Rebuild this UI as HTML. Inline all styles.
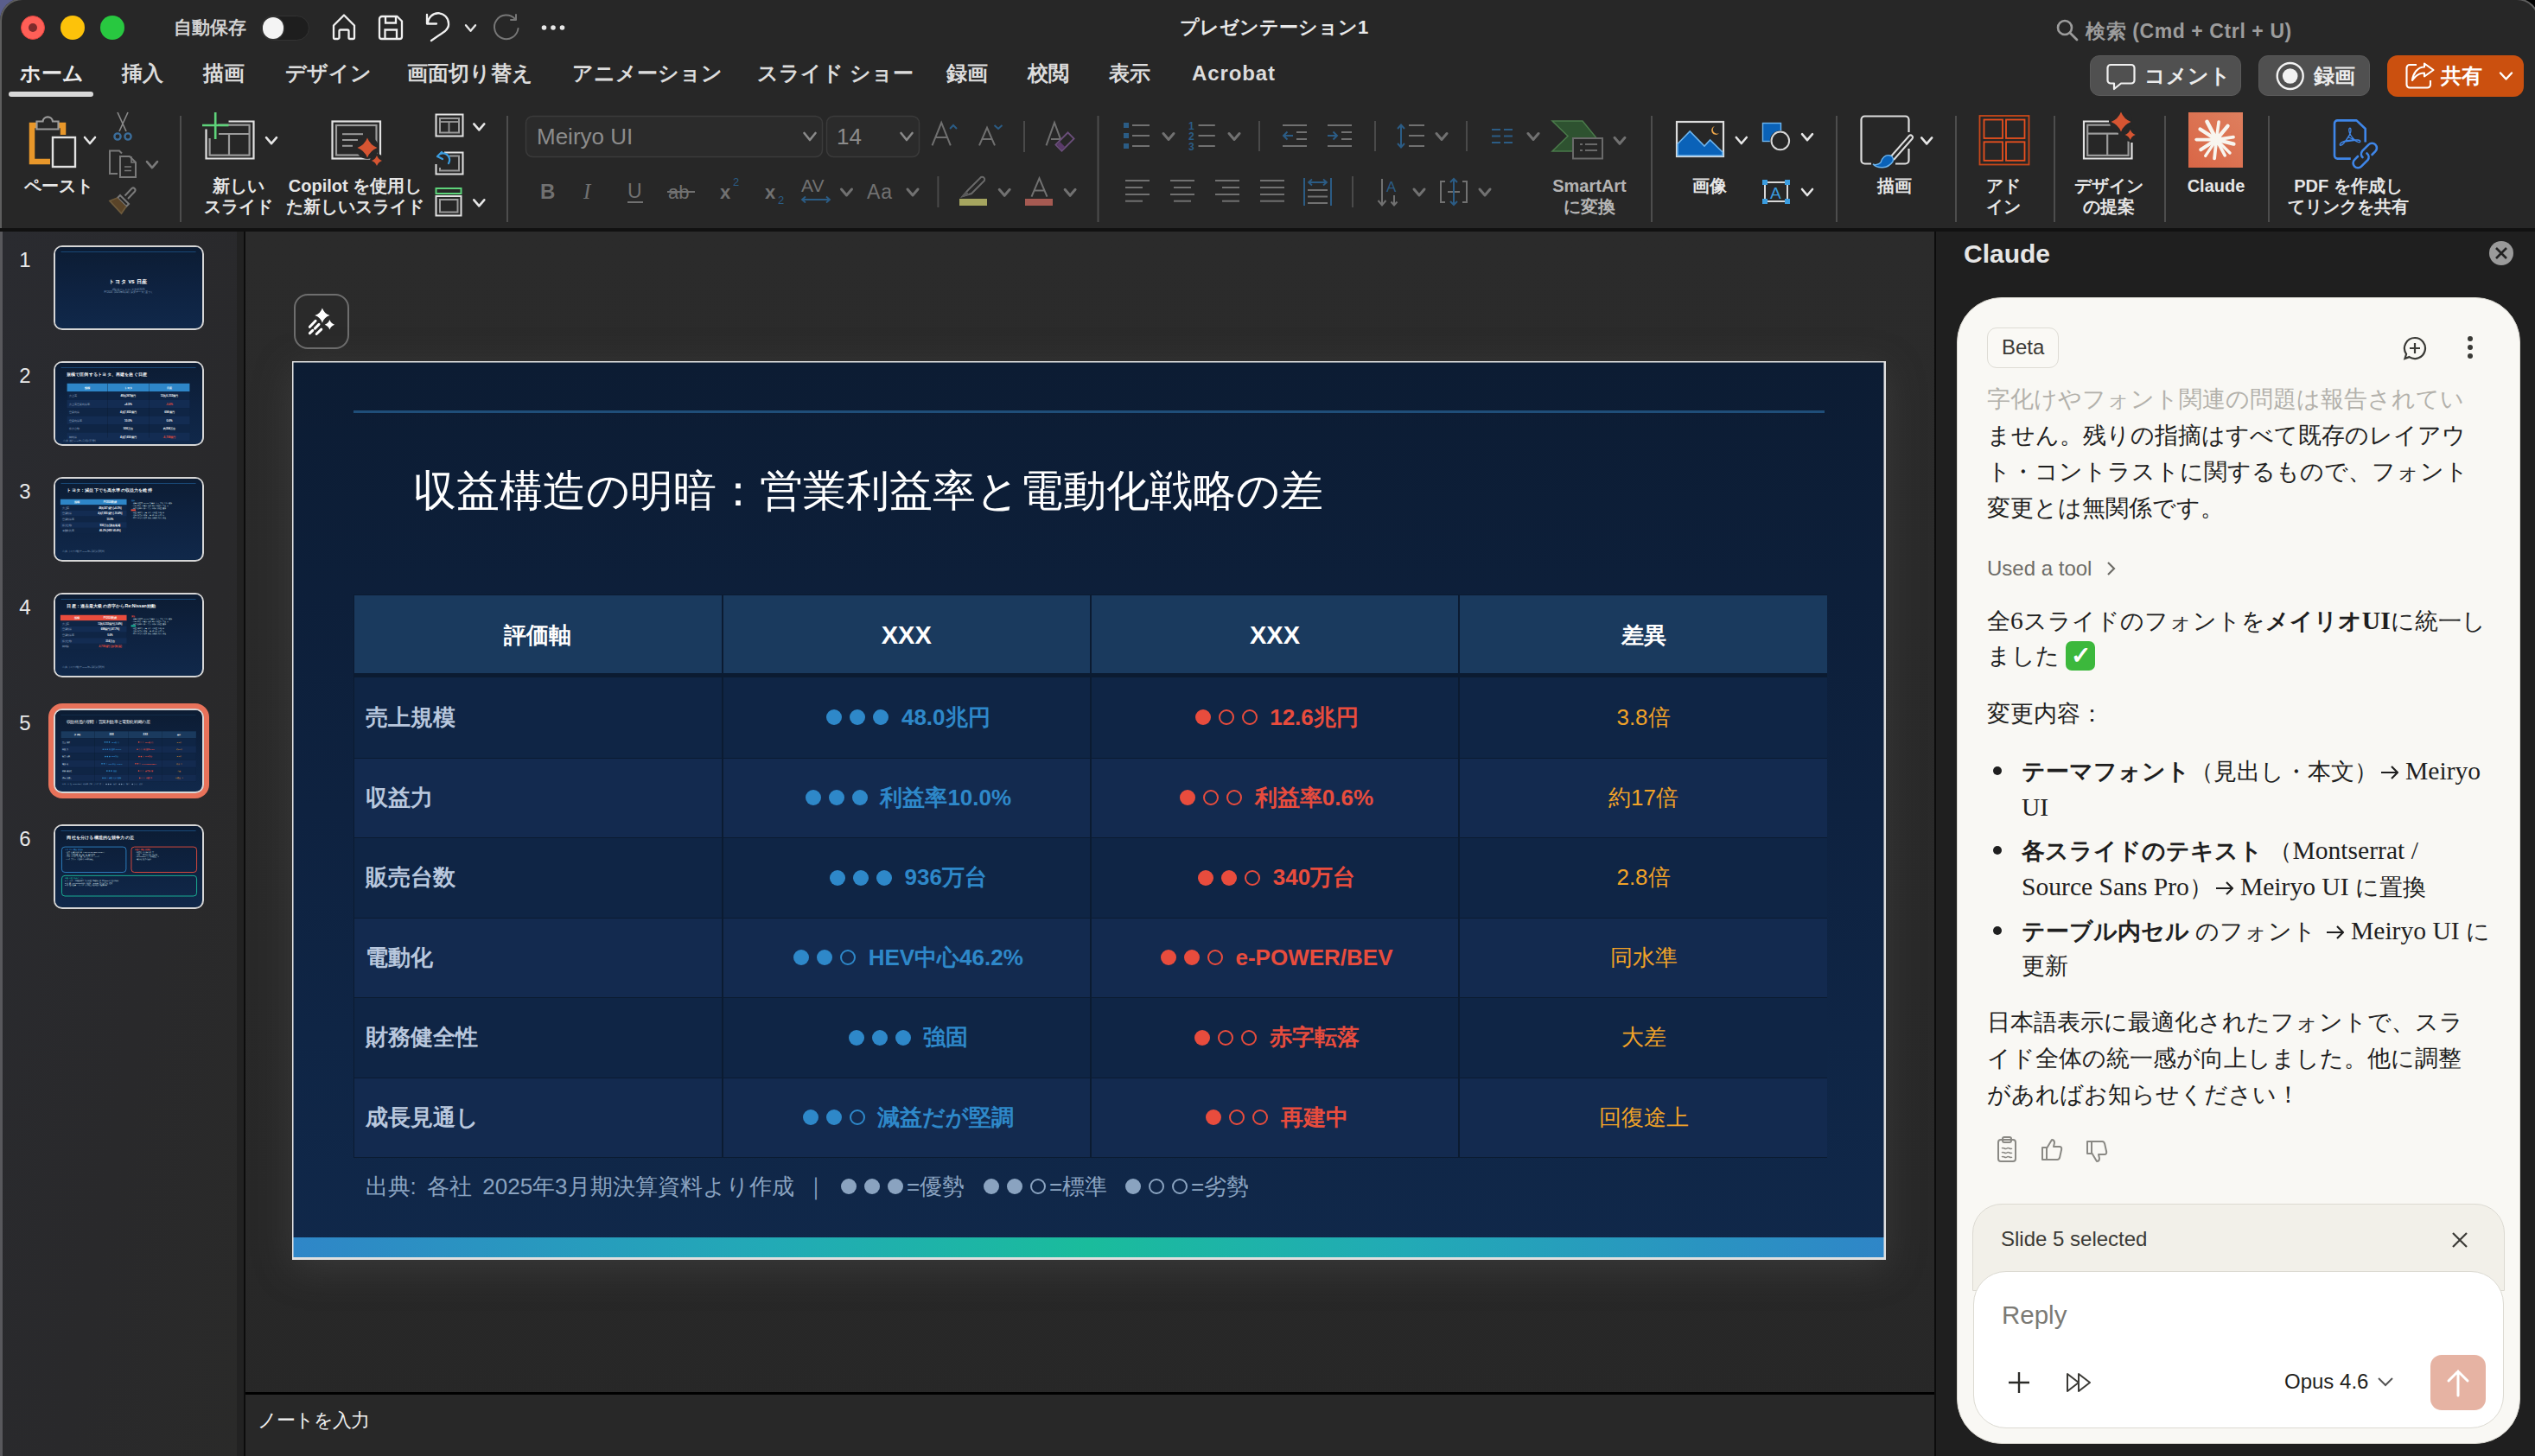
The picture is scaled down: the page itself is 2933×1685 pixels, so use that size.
<!DOCTYPE html>
<html><head><meta charset="utf-8">
<style>
*{margin:0;padding:0;box-sizing:border-box}
html,body{width:2933px;height:1685px;overflow:hidden;background:linear-gradient(90deg,#5a5e8c 0,#5a5e8c 40px,#000 41px);font-family:"Liberation Sans",sans-serif}
.a{position:absolute}
#win{position:absolute;left:0;top:-2px;width:2938px;height:1687px;background:#272727;border-radius:26px 26px 0 0;overflow:hidden;box-shadow:inset 0 0 0 2px #5e5e5e}
#wc{position:absolute;left:0;top:2px;width:2933px;height:1685px}
.tl{position:absolute;width:28px;height:28px;border-radius:50%;top:18px}
.tab{position:absolute;top:70px;font-size:24px;font-weight:bold;color:#dcdcdc;line-height:30px;white-space:nowrap}
.rt{position:absolute;font-size:20px;font-weight:bold;color:#e6e6e6;line-height:24px;text-align:center;white-space:nowrap}
.sep{position:absolute;width:2px;background:#4a4a4a}
.chev{position:absolute;width:12px;height:8px}
/* slide panel */
#panel{position:absolute;left:0;top:268px;width:283px;height:1417px;background:linear-gradient(100deg,#2a2b30 0%,#29292b 60%,#2a2a29 100%)}
.num{position:absolute;left:14px;width:30px;text-align:center;font-size:24px;color:#e8e8e8;line-height:30px}
.th{position:absolute;left:62px;width:174px;height:98px;border:2.5px solid #d6d6d6;border-radius:10px;background:linear-gradient(180deg,#0c1a30,#102847);overflow:hidden}
.sl{width:1844px;height:1038px;transform:scale(0.0917,0.0896);transform-origin:0 0;background:linear-gradient(180deg,#0c1c33 0%,#0e2240 50%,#10284a 100%)}
/* main */
#main{position:absolute;left:284px;top:268px;width:1954px;height:1417px;background:linear-gradient(180deg,#2b2b2b 0%,#292929 60%,#272727 100%)}
#slide{position:absolute;left:338px;top:418px;width:1844px;height:1040px;box-shadow:0 10px 40px rgba(80,80,80,0.45);background:linear-gradient(180deg,#0c1c33 0%,#0e2240 50%,#10284a 100%);overflow:hidden}
.cell{position:absolute;font-size:26px;font-weight:bold;line-height:30px;white-space:nowrap}
.hc{display:flex;align-items:center;justify-content:center;font-size:26px;font-weight:bold;color:#fff;background:#1a3a5e;padding-top:4px}
.tc{display:flex;align-items:center;justify-content:center;font-size:26px;font-weight:bold;white-space:nowrap}
.lb{justify-content:flex-start;padding-left:13px;color:#b8c7dd}
.bl{color:#2e88c9}.rd{color:#e84c3d}.or{color:#f0a228;font-weight:normal}
.d{display:inline-block;width:18px;height:18px;border-radius:50%;background:currentColor;margin:0 4.5px;flex:none}.o{background:transparent;border:2px solid currentColor}.vt{margin-left:10px}
.ft{top:940px;font-size:26px;line-height:30px;color:#8aa3c0;white-space:nowrap;display:flex;align-items:center}.ft .d{margin:0 4.5px}
/* claude */
.arr{font-size:1.25em;line-height:1;display:inline-block;vertical-align:-1px}.arw{display:inline-block;vertical-align:-2px;margin:0 6px 0 2px}
.ct b{font-weight:bold}.chk{display:inline-block;width:34px;height:34px;border-radius:7px;background:#3cb83c;color:#fff;font-size:28px;line-height:34px;text-align:center;font-weight:bold;vertical-align:middle;position:relative;top:-2px}

#cp{position:absolute;left:2240px;top:268px;width:693px;height:1417px;background:#1f1f1f}
#card{position:absolute;left:2264px;top:344px;width:652px;height:1327px;background:#f9f8f4;border-radius:52px;border:1.5px solid #d8d6cf;overflow:hidden}
.ct{position:absolute;left:2299px;font-size:26.9px;line-height:42px;color:#1f1f1f;white-space:nowrap}
.serif{font-family:"Liberation Serif",serif;font-size:1.1em}
</style></head><body>
<div id="win"><div id="wc">
  <!-- traffic lights -->
  <div class="tl" style="left:24px;background:#ff5f57;border:1px solid #e0443e"><div class="a" style="left:7.5px;top:7.5px;width:10.5px;height:10.5px;border-radius:50%;background:#7e2b2b"></div></div>
  <div class="tl" style="left:70px;background:#fdc20a"></div>
  <div class="tl" style="left:116px;background:#28c840"></div>
  <div class="a" style="left:201px;top:19px;font-size:21px;font-weight:bold;color:#d2d2d2;line-height:26px">自動保存</div>
  <div class="a" style="left:301px;top:18px;width:57px;height:29px;border-radius:15px;background:#1e1e1e;border:1px solid #333"></div>
  <div class="a" style="left:303.5px;top:20px;width:24.5px;height:24.5px;border-radius:50%;background:#f4f4f4;box-shadow:0 0 0 1.5px #333"></div>
  <div class="a" style="left:1365px;top:18px;font-size:22px;color:#e8e8e8;line-height:28px;font-weight:bold">プレゼンテーション1</div>
  <div class="a" style="left:2413px;top:21px;font-size:23px;font-weight:bold;color:#9c9c9c;line-height:30px;letter-spacing:0.6px">検索 (Cmd + Ctrl + U)</div>

  <!-- tabs -->
  <div class="tab" style="left:23px;color:#ececec">ホーム</div>
  <div class="a" style="left:10px;top:106px;width:98px;height:6px;border-radius:3px;background:#d8d8d8"></div>
  <div class="tab" style="left:141px">挿入</div>
  <div class="tab" style="left:235px">描画</div>
  <div class="tab" style="left:330px">デザイン</div>
  <div class="tab" style="left:471px">画面切り替え</div>
  <div class="tab" style="left:662px">アニメーション</div>
  <div class="tab" style="left:876px">スライド ショー</div>
  <div class="tab" style="left:1095px">録画</div>
  <div class="tab" style="left:1189px">校閲</div>
  <div class="tab" style="left:1283px">表示</div>
  <div class="tab" style="left:1379px;letter-spacing:0.9px">Acrobat</div>

  <!-- right buttons -->
  <div class="a" style="left:2418px;top:64px;width:175px;height:47px;border-radius:11px;background:#505050;border:1.5px solid #5a5a5a"></div>
  <div class="a" style="left:2481px;top:73px;font-size:24px;font-weight:bold;color:#ececec;line-height:30px">コメント</div>
  <div class="a" style="left:2613px;top:64px;width:129px;height:47px;border-radius:11px;background:#505050;border:1.5px solid #5a5a5a"></div>
  <div class="a" style="left:2677px;top:73px;font-size:24px;font-weight:bold;color:#ececec;line-height:30px">録画</div>
  <div class="a" style="left:2762px;top:64px;width:158px;height:48px;border-radius:12px;background:#cb500f"></div>
  <div class="a" style="left:2824px;top:73px;font-size:24px;font-weight:bold;color:#fff;line-height:30px">共有</div>

  <svg class="a" style="left:0;top:0" width="2933" height="268" viewBox="0 0 2933 268"><path d="M58 187H37V145H73V156" fill="none" stroke="#e8972a" stroke-width="6.5" /><path d="M42.5 149.5V140.5H49.5A5.8 5.8 0 0 1 61 140.5H67.5V149.5Z" fill="#272727" stroke="#9a9a9a" stroke-width="2.2" /><rect x="61" y="159" width="26" height="34" fill="#272727" stroke="#e2e2e2" stroke-width="2.4" rx="0"/><path d="M98.0 159.0L104 166.0L110.0 159.0" fill="none" stroke="#e6e6e6" stroke-width="2.6" stroke-linecap="round" stroke-linejoin="round"/><line x1="136" y1="130" x2="146" y2="152" stroke="#8a8a8a" stroke-width="1.6" stroke-linecap="butt"/><line x1="148" y1="130" x2="138" y2="152" stroke="#8a8a8a" stroke-width="1.6" stroke-linecap="butt"/><circle cx="136" cy="158" r="3.6" fill="none" stroke="#3b6d9a" stroke-width="2.4"/><circle cx="148" cy="158" r="3.6" fill="none" stroke="#3b6d9a" stroke-width="2.4"/><path d="M136 201H127V174.5H138L141 177.5" fill="none" stroke="#7a7a7a" stroke-width="2" /><path d="M139 205V181H150L157 188V205Z" fill="none" stroke="#7a7a7a" stroke-width="2" /><path d="M152 181V188H157" fill="none" stroke="#7a7a7a" stroke-width="1.6" /><line x1="144" y1="193" x2="152" y2="193" stroke="#7a7a7a" stroke-width="1.6" stroke-linecap="butt"/><line x1="144" y1="197.5" x2="152" y2="197.5" stroke="#7a7a7a" stroke-width="1.6" stroke-linecap="butt"/><path d="M170.0 187.1L176 194.1L182.0 187.1" fill="none" stroke="#7a7a7a" stroke-width="2.6" stroke-linecap="round" stroke-linejoin="round"/><path d="M148 230L156 221.5A2.5 2.5 0 0 0 152.5 218L144.5 226.5" fill="none" stroke="#7a7a7a" stroke-width="2" /><path d="M139 226L149 236L146 239L136 229Z" fill="none" stroke="#7a7a7a" stroke-width="2" /><path d="M136 229Q130 231 127 232.5L140.5 247L146 239" fill="#5a4428" stroke="#6d5a3c" stroke-width="1.8" /><rect x="208" y="134" width="2" height="123" fill="#4d4d4d"/><path d="M264.5 140.5H293.5V183.5H238.5V149.5" fill="none" stroke="#e2e2e2" stroke-width="2.2" /><path d="M252 144.7H288.6V179.7H242.6V160" fill="none" stroke="#9a9a9a" stroke-width="2.2" /><line x1="253" y1="155" x2="288.6" y2="155" stroke="#9a9a9a" stroke-width="2.2" stroke-linecap="butt"/><line x1="265" y1="155" x2="265" y2="179.7" stroke="#9a9a9a" stroke-width="2.2" stroke-linecap="butt"/><line x1="234" y1="145" x2="264.5" y2="145" stroke="#5ed37a" stroke-width="2.6" stroke-linecap="butt"/><line x1="249.2" y1="130" x2="249.2" y2="161" stroke="#5ed37a" stroke-width="2.6" stroke-linecap="butt"/><path d="M308.0 159.2L314 166.2L320.0 159.2" fill="none" stroke="#e6e6e6" stroke-width="2.6" stroke-linecap="round" stroke-linejoin="round"/><rect x="384.5" y="140.5" width="55.5" height="43.0" fill="none" stroke="#e2e2e2" stroke-width="2.2" rx="0"/><rect x="389" y="145" width="46.5" height="34.5" fill="none" stroke="#9a9a9a" stroke-width="2.2" rx="0"/><line x1="396" y1="155.2" x2="420" y2="155.2" stroke="#9a9a9a" stroke-width="2" stroke-linecap="butt"/><line x1="396" y1="162" x2="414" y2="162" stroke="#9a9a9a" stroke-width="2" stroke-linecap="butt"/><line x1="396" y1="168.8" x2="408" y2="168.8" stroke="#9a9a9a" stroke-width="2" stroke-linecap="butt"/><circle cx="425" cy="171" r="13" fill="#272727"/><circle cx="436" cy="186" r="8" fill="#272727"/><path d="M425 159.5Q428.22 167.78 436.5 171Q428.22 174.22 425 182.5Q421.78 174.22 413.5 171Q421.78 167.78 425 159.5Z" fill="#d65532"/><path d="M436 180Q437.68 184.32 442 186Q437.68 187.68 436 192Q434.32 187.68 430 186Q434.32 184.32 436 180Z" fill="#d65532"/><rect x="504.5" y="132.5" width="31.0" height="25.0" fill="none" stroke="#e2e2e2" stroke-width="2" rx="0"/><rect x="509" y="137" width="22" height="16.5" fill="none" stroke="#9a9a9a" stroke-width="2" rx="0"/><line x1="509" y1="141" x2="531" y2="141" stroke="#9a9a9a" stroke-width="1.8" stroke-linecap="butt"/><line x1="519.5" y1="141" x2="519.5" y2="153.5" stroke="#9a9a9a" stroke-width="1.8" stroke-linecap="butt"/><path d="M548.3 143.4L554.3 150.4L560.3 143.4" fill="none" stroke="#e6e6e6" stroke-width="2.6" stroke-linecap="round" stroke-linejoin="round"/><path d="M514 176.5H535.5V201.5H504.5V190" fill="none" stroke="#e2e2e2" stroke-width="2" /><path d="M520 180.5H531V197.5H509V194" fill="none" stroke="#9a9a9a" stroke-width="2" /><path d="M519 189A7 7 0 0 0 506 181M506 181L511 176M506 181L512 184" fill="none" stroke="#3b9de0" stroke-width="2.2" stroke-linecap="round"/><rect x="504.5" y="218" width="29.0" height="6" fill="none" stroke="#5ed37a" stroke-width="2" rx="0"/><rect x="504.5" y="227" width="29.0" height="22.5" fill="none" stroke="#e2e2e2" stroke-width="2" rx="0"/><rect x="509" y="231" width="20.5" height="14.5" fill="none" stroke="#9a9a9a" stroke-width="2" rx="0"/><path d="M548.3 231.3L554.3 238.3L560.3 231.3" fill="none" stroke="#e6e6e6" stroke-width="2.6" stroke-linecap="round" stroke-linejoin="round"/><rect x="586" y="134" width="2" height="123" fill="#4d4d4d"/><rect x="608.5" y="134.5" width="343" height="47" rx="8" fill="#2b2b2b" stroke="#3b3b3b" stroke-width="1.5"/><rect x="956.5" y="134.5" width="107" height="47" rx="8" fill="#2b2b2b" stroke="#3b3b3b" stroke-width="1.5"/><path d="M930.5 154.0L937 162.0L943.5 154.0" fill="none" stroke="#8a8a8a" stroke-width="2.6" stroke-linecap="round" stroke-linejoin="round"/><path d="M1042.5 154.0L1049 162.0L1055.5 154.0" fill="none" stroke="#8a8a8a" stroke-width="2.6" stroke-linecap="round" stroke-linejoin="round"/><path d="M1078.5 168.3L1089.2 142L1099.8 168.3M1082.5 159H1096" fill="none" stroke="#707070" stroke-width="2" /><path d="M1099 149L1103 145L1107 149" fill="none" stroke="#2b5c85" stroke-width="2" /><path d="M1133 168.3L1142 147.8L1151 168.3M1136.2 161H1147.8" fill="none" stroke="#707070" stroke-width="2" /><path d="M1150.5 145L1155 149L1159.5 145" fill="none" stroke="#2b5c85" stroke-width="2" /><rect x="1184" y="140" width="2" height="36" fill="#4a4a4a"/><path d="M1210.5 168.3L1220 142L1227 161H1216" fill="none" stroke="#707070" stroke-width="2" /><g transform="rotate(-45 1232 164)"><rect x="1222" y="159" width="20" height="10" fill="none" stroke="#6a4e7a" stroke-width="1.8"/><rect x="1223" y="160" width="5" height="8" fill="#5a3a6a"/></g><text x="625" y="230" font-family="Liberation Sans" font-weight="bold" font-size="24" fill="#717171">B</text><text x="675" y="230" font-family="Liberation Serif" font-style="italic" font-size="25" fill="#717171">I</text><text x="726" y="229" font-family="Liberation Sans" font-size="23" fill="#717171">U</text><line x1="726" y1="234" x2="744" y2="234" stroke="#717171" stroke-width="2" stroke-linecap="butt"/><text x="773" y="230" font-family="Liberation Sans" font-size="22" fill="#717171">ab</text><line x1="772" y1="222" x2="804" y2="222" stroke="#717171" stroke-width="2" stroke-linecap="butt"/><text x="833" y="230" font-family="Liberation Sans" font-weight="bold" font-size="22" fill="#717171">x</text><text x="848" y="215" font-family="Liberation Sans" font-size="13" fill="#2b5c85">2</text><text x="885" y="230" font-family="Liberation Sans" font-weight="bold" font-size="22" fill="#717171">x</text><text x="900" y="236" font-family="Liberation Sans" font-size="13" fill="#2b5c85">2</text><text x="927" y="222" font-family="Liberation Sans" font-size="21" fill="#717171">AV</text><path d="M928 231H960M932 227.5L928 231L932 234.5M956 227.5L960 231L956 234.5" fill="none" stroke="#2b5c85" stroke-width="1.8" /><path d="M973.5 219.0L979.5 226.0L985.5 219.0" fill="none" stroke="#717171" stroke-width="3" stroke-linecap="round" stroke-linejoin="round"/><text x="1003" y="230" font-family="Liberation Sans" font-size="23" letter-spacing="1" fill="#717171">Aa</text><path d="M1050.0 219.0L1056 226.0L1062.0 219.0" fill="none" stroke="#717171" stroke-width="3" stroke-linecap="round" stroke-linejoin="round"/><rect x="1084.4" y="204" width="2" height="36" fill="#4a4a4a"/><path d="M1114 227L1120 220L1135 205A3 3 0 0 1 1139 209L1124 224Z" fill="none" stroke="#6a6a6a" stroke-width="2" /><path d="M1112.7 227.7L1118 222L1121 225Z" fill="#5a5a5a" stroke="#5a5a5a" stroke-width="1" /><rect x="1110" y="230" width="32" height="8" fill="#a5a55f" stroke="none" stroke-width="0" rx="0"/><path d="M1156.2 219.3L1162.2 226.3L1168.2 219.3" fill="none" stroke="#717171" stroke-width="3" stroke-linecap="round" stroke-linejoin="round"/><path d="M1193.5 227.7L1202.5 206.3L1211.5 227.7M1196.5 220.5H1208.5" fill="none" stroke="#717171" stroke-width="2" /><rect x="1186" y="230" width="32" height="8" fill="#a65a52" stroke="none" stroke-width="0" rx="0"/><path d="M1232.1 219.3L1238.1 226.3L1244.1 219.3" fill="none" stroke="#717171" stroke-width="3" stroke-linecap="round" stroke-linejoin="round"/><rect x="1269.5" y="134" width="2" height="123" fill="#4d4d4d"/><rect x="1300" y="142" width="6" height="6" fill="#2b5c85" stroke="none" stroke-width="0" rx="0"/><line x1="1310" y1="145" x2="1330" y2="145" stroke="#717171" stroke-width="2" stroke-linecap="butt"/><rect x="1300" y="154" width="6" height="6" fill="#2b5c85" stroke="none" stroke-width="0" rx="0"/><line x1="1310" y1="157" x2="1330" y2="157" stroke="#717171" stroke-width="2" stroke-linecap="butt"/><rect x="1300" y="166" width="6" height="6" fill="#2b5c85" stroke="none" stroke-width="0" rx="0"/><line x1="1310" y1="169" x2="1330" y2="169" stroke="#717171" stroke-width="2" stroke-linecap="butt"/><path d="M1346.0 154.5L1352 161.5L1358.0 154.5" fill="none" stroke="#717171" stroke-width="3" stroke-linecap="round" stroke-linejoin="round"/><text x="1375" y="150" font-family="Liberation Sans" font-weight="bold" font-size="12" fill="#2b5c85">1</text><line x1="1386.5" y1="145" x2="1405.8" y2="145" stroke="#717171" stroke-width="2" stroke-linecap="butt"/><text x="1375" y="162" font-family="Liberation Sans" font-weight="bold" font-size="12" fill="#2b5c85">2</text><line x1="1386.5" y1="157" x2="1405.8" y2="157" stroke="#717171" stroke-width="2" stroke-linecap="butt"/><text x="1375" y="174" font-family="Liberation Sans" font-weight="bold" font-size="12" fill="#2b5c85">3</text><line x1="1386.5" y1="169" x2="1405.8" y2="169" stroke="#717171" stroke-width="2" stroke-linecap="butt"/><path d="M1422.0 154.5L1428 161.5L1434.0 154.5" fill="none" stroke="#717171" stroke-width="3" stroke-linecap="round" stroke-linejoin="round"/><rect x="1456" y="140" width="2" height="35" fill="#4a4a4a"/><line x1="1484" y1="145" x2="1512" y2="145" stroke="#717171" stroke-width="2"/><line x1="1500" y1="153" x2="1512" y2="153" stroke="#717171" stroke-width="2"/><line x1="1500" y1="161" x2="1512" y2="161" stroke="#717171" stroke-width="2"/><line x1="1484" y1="169" x2="1512" y2="169" stroke="#717171" stroke-width="2"/><path d="M1496 157H1485.5M1489.5 152.5L1485 157L1489.5 161.5" fill="none" stroke="#2b5c85" stroke-width="2" /><line x1="1536" y1="145" x2="1564" y2="145" stroke="#717171" stroke-width="2"/><line x1="1552" y1="153" x2="1564" y2="153" stroke="#717171" stroke-width="2"/><line x1="1552" y1="161" x2="1564" y2="161" stroke="#717171" stroke-width="2"/><line x1="1536" y1="169" x2="1564" y2="169" stroke="#717171" stroke-width="2"/><path d="M1536 157H1547M1542.5 152.5L1547 157L1542.5 161.5" fill="none" stroke="#2b5c85" stroke-width="2" /><rect x="1590" y="140" width="2" height="35" fill="#4a4a4a"/><path d="M1621 145V170M1617 149L1621 144.5L1625 149M1617 166L1621 170.5L1625 166" fill="none" stroke="#2b5c85" stroke-width="2" /><line x1="1630" y1="145" x2="1648" y2="145" stroke="#717171" stroke-width="2" stroke-linecap="butt"/><line x1="1630" y1="157" x2="1648" y2="157" stroke="#717171" stroke-width="2" stroke-linecap="butt"/><line x1="1630" y1="169" x2="1648" y2="169" stroke="#717171" stroke-width="2" stroke-linecap="butt"/><path d="M1662.0 154.5L1668 161.5L1674.0 154.5" fill="none" stroke="#717171" stroke-width="3" stroke-linecap="round" stroke-linejoin="round"/><rect x="1696" y="140" width="2" height="35" fill="#4a4a4a"/><line x1="1726" y1="150" x2="1736" y2="150" stroke="#2b5c85" stroke-width="2" stroke-linecap="butt"/><line x1="1740" y1="150" x2="1750" y2="150" stroke="#2b5c85" stroke-width="2" stroke-linecap="butt"/><line x1="1726" y1="157.5" x2="1736" y2="157.5" stroke="#2b5c85" stroke-width="2" stroke-linecap="butt"/><line x1="1740" y1="157.5" x2="1750" y2="157.5" stroke="#2b5c85" stroke-width="2" stroke-linecap="butt"/><line x1="1726" y1="165" x2="1736" y2="165" stroke="#2b5c85" stroke-width="2" stroke-linecap="butt"/><line x1="1740" y1="165" x2="1750" y2="165" stroke="#2b5c85" stroke-width="2" stroke-linecap="butt"/><path d="M1768.0 154.5L1774 161.5L1780.0 154.5" fill="none" stroke="#717171" stroke-width="3" stroke-linecap="round" stroke-linejoin="round"/><path d="M1796 140H1831L1849 162L1831 175H1796L1814 157.5Z" fill="#2e5230" stroke="#4a7a4a" stroke-width="1.5" /><rect x="1820" y="160" width="34" height="23.5" fill="#272727" stroke="#6a6a6a" stroke-width="2" rx="0"/><line x1="1828" y1="167" x2="1831" y2="167" stroke="#6a6a6a" stroke-width="2" stroke-linecap="butt"/><line x1="1834" y1="167" x2="1848" y2="167" stroke="#6a6a6a" stroke-width="2" stroke-linecap="butt"/><line x1="1828" y1="174" x2="1831" y2="174" stroke="#6a6a6a" stroke-width="2" stroke-linecap="butt"/><line x1="1834" y1="174" x2="1848" y2="174" stroke="#6a6a6a" stroke-width="2" stroke-linecap="butt"/><path d="M1868.0 159.3L1874 166.3L1880.0 159.3" fill="none" stroke="#717171" stroke-width="3" stroke-linecap="round" stroke-linejoin="round"/><line x1="1302" y1="209" x2="1330" y2="209" stroke="#717171" stroke-width="2" stroke-linecap="butt"/><line x1="1302" y1="217" x2="1322" y2="217" stroke="#717171" stroke-width="2" stroke-linecap="butt"/><line x1="1302" y1="225" x2="1330" y2="225" stroke="#717171" stroke-width="2" stroke-linecap="butt"/><line x1="1302" y1="232.7" x2="1322" y2="232.7" stroke="#717171" stroke-width="2" stroke-linecap="butt"/><line x1="1354.0" y1="209" x2="1382.0" y2="209" stroke="#717171" stroke-width="2" stroke-linecap="butt"/><line x1="1358.0" y1="217" x2="1378.0" y2="217" stroke="#717171" stroke-width="2" stroke-linecap="butt"/><line x1="1354.0" y1="225" x2="1382.0" y2="225" stroke="#717171" stroke-width="2" stroke-linecap="butt"/><line x1="1358.0" y1="232.7" x2="1378.0" y2="232.7" stroke="#717171" stroke-width="2" stroke-linecap="butt"/><line x1="1406" y1="209" x2="1434" y2="209" stroke="#717171" stroke-width="2" stroke-linecap="butt"/><line x1="1414" y1="217" x2="1434" y2="217" stroke="#717171" stroke-width="2" stroke-linecap="butt"/><line x1="1406" y1="225" x2="1434" y2="225" stroke="#717171" stroke-width="2" stroke-linecap="butt"/><line x1="1414" y1="232.7" x2="1434" y2="232.7" stroke="#717171" stroke-width="2" stroke-linecap="butt"/><line x1="1458" y1="209" x2="1486" y2="209" stroke="#717171" stroke-width="2" stroke-linecap="butt"/><line x1="1458" y1="217" x2="1486" y2="217" stroke="#717171" stroke-width="2" stroke-linecap="butt"/><line x1="1458" y1="225" x2="1486" y2="225" stroke="#717171" stroke-width="2" stroke-linecap="butt"/><line x1="1458" y1="232.7" x2="1486" y2="232.7" stroke="#717171" stroke-width="2" stroke-linecap="butt"/><line x1="1509" y1="206" x2="1509" y2="238" stroke="#2b5c85" stroke-width="2" stroke-linecap="butt"/><line x1="1540" y1="206" x2="1540" y2="238" stroke="#2b5c85" stroke-width="2" stroke-linecap="butt"/><path d="M1514 211H1535M1518 207.5L1514 211L1518 214.5M1531 207.5L1535 211L1531 214.5" fill="none" stroke="#2b5c85" stroke-width="1.8" /><line x1="1513" y1="220" x2="1536" y2="220" stroke="#717171" stroke-width="2" stroke-linecap="butt"/><line x1="1513" y1="227.5" x2="1536" y2="227.5" stroke="#717171" stroke-width="2" stroke-linecap="butt"/><line x1="1513" y1="235" x2="1536" y2="235" stroke="#717171" stroke-width="2" stroke-linecap="butt"/><rect x="1564" y="204" width="2" height="36" fill="#4a4a4a"/><path d="M1599 207V237M1594.5 232L1599 237.5L1603.5 232" fill="none" stroke="#717171" stroke-width="2" /><text x="1604" y="222" font-family="Liberation Sans" font-size="17" fill="#2b5c85">A</text><path d="M1613 226V237M1609.5 233.5L1613 237.5L1616.5 233.5" fill="none" stroke="#717171" stroke-width="2" /><path d="M1636.0 219.0L1642 226.0L1648.0 219.0" fill="none" stroke="#717171" stroke-width="3" stroke-linecap="round" stroke-linejoin="round"/><path d="M1672 210H1667V234H1672M1692 210H1697V234H1692" fill="none" stroke="#717171" stroke-width="2" /><line x1="1675" y1="222" x2="1689" y2="222" stroke="#717171" stroke-width="2" stroke-linecap="butt"/><path d="M1682 207V237M1678 211L1682 207L1686 211M1678 233L1682 237L1686 233" fill="none" stroke="#2b5c85" stroke-width="2" /><path d="M1712.0 219.0L1718 226.0L1724.0 219.0" fill="none" stroke="#717171" stroke-width="3" stroke-linecap="round" stroke-linejoin="round"/><rect x="1910" y="134" width="2" height="123" fill="#4d4d4d"/><rect x="1940" y="141" width="54" height="40" fill="#272727" stroke="#dcdcdc" stroke-width="2.2" rx="0"/><path d="M1941 166.5L1955.2 152L1972 169L1978.6 162L1993 176V180H1941Z" fill="#0a62b8" stroke="#6cb4ee" stroke-width="1.6" /><path d="M1984 146A5 5 0 1 0 1989 154A4.2 4.2 0 0 1 1984 146Z" fill="#f0a84a"/><path d="M2008.8 159.0L2014.8 166.0L2020.8 159.0" fill="none" stroke="#e6e6e6" stroke-width="2.6" stroke-linecap="round" stroke-linejoin="round"/><rect x="2039.5" y="142.5" width="21.0" height="21.0" fill="#0a62b8" stroke="#6cb4ee" stroke-width="1.4" rx="0"/><circle cx="2059.8" cy="162.9" r="12" fill="#272727"/><circle cx="2059.8" cy="162.9" r="10.3" fill="none" stroke="#d8d8d8" stroke-width="2"/><path d="M2085.0 155.2L2091 162.2L2097.0 155.2" fill="none" stroke="#e6e6e6" stroke-width="2.6" stroke-linecap="round" stroke-linejoin="round"/><rect x="2042" y="211" width="26" height="22" fill="none" stroke="#d8d8d8" stroke-width="2" rx="0"/><rect x="2039" y="208" width="6" height="6" fill="#3b9de0" stroke="none" stroke-width="0" rx="0"/><rect x="2065" y="208" width="6" height="6" fill="#3b9de0" stroke="none" stroke-width="0" rx="0"/><rect x="2039" y="230" width="6" height="6" fill="#3b9de0" stroke="none" stroke-width="0" rx="0"/><rect x="2065" y="230" width="6" height="6" fill="#3b9de0" stroke="none" stroke-width="0" rx="0"/><text x="2048" y="230" font-family="Liberation Sans" font-size="19" fill="#3b9de0">A</text><path d="M2085.0 219.0L2091 226.0L2097.0 219.0" fill="none" stroke="#e6e6e6" stroke-width="2.6" stroke-linecap="round" stroke-linejoin="round"/><rect x="2124" y="134" width="2" height="123" fill="#4d4d4d"/><path d="M2165 189.5H2157.5A4 4 0 0 1 2153.5 185.5V138.5A4 4 0 0 1 2157.5 134.5H2204.5A4 4 0 0 1 2208.5 138.5V153M2208.5 172V185.5A4 4 0 0 1 2204.5 189.5H2193" fill="none" stroke="#dedede" stroke-width="2.2" /><path d="M2187 182L2209 157A2.5 2.5 0 0 1 2212.5 160.5L2191 185" fill="#272727" stroke="#dedede" stroke-width="2" /><path d="M2187 180C2181 178 2177 184 2176 188C2173 191 2169 191 2167 190C2172 195 2184 196 2190 187C2191 184 2190 181 2187 180Z" fill="#0a62b8" stroke="#6cb4ee" stroke-width="1.4" /><path d="M2223.2 159.4L2229.2 166.4L2235.2 159.4" fill="none" stroke="#e6e6e6" stroke-width="2.6" stroke-linecap="round" stroke-linejoin="round"/><rect x="2262" y="134" width="2" height="123" fill="#4d4d4d"/><rect x="2290.5" y="134" width="57.0" height="56.5" fill="none" stroke="#c8481a" stroke-width="1.8" rx="0"/><rect x="2295.5" y="138.5" width="21.5" height="21.5" fill="none" stroke="#e8501f" stroke-width="1.8" rx="0"/><rect x="2321" y="138.5" width="21.5" height="21.5" fill="none" stroke="#e8501f" stroke-width="1.8" rx="0"/><rect x="2295.5" y="164.3" width="21.5" height="21.5" fill="none" stroke="#e8501f" stroke-width="1.8" rx="0"/><rect x="2321" y="164.3" width="21.5" height="21.5" fill="none" stroke="#e8501f" stroke-width="1.8" rx="0"/><rect x="2376" y="134" width="2" height="123" fill="#4d4d4d"/><path d="M2440 140.5H2411V183.5H2466.5V165" fill="none" stroke="#e2e2e2" stroke-width="2.2" /><path d="M2445 144.7H2415.2V179.8H2462.6V163" fill="none" stroke="#9a9a9a" stroke-width="2.2" /><line x1="2415" y1="154.7" x2="2451" y2="154.7" stroke="#9a9a9a" stroke-width="2.2" stroke-linecap="butt"/><line x1="2438.2" y1="154.7" x2="2438.2" y2="179.8" stroke="#9a9a9a" stroke-width="2.2" stroke-linecap="butt"/><circle cx="2454" cy="141" r="13" fill="#272727"/><circle cx="2464.7" cy="156" r="8" fill="#272727"/><path d="M2454 129.5Q2457.22 137.78 2465.5 141Q2457.22 144.22 2454 152.5Q2450.78 144.22 2442.5 141Q2450.78 137.78 2454 129.5Z" fill="#d65532"/><path d="M2464.7 150Q2466.3799999999997 154.32 2470.7 156Q2466.3799999999997 157.68 2464.7 162Q2463.02 157.68 2458.7 156Q2463.02 154.32 2464.7 150Z" fill="#d65532"/><rect x="2504" y="134" width="2" height="123" fill="#4d4d4d"/><defs><linearGradient id="cg" x1="0" y1="1" x2="1" y2="0"><stop offset="0" stop-color="#d96646"/><stop offset="1" stop-color="#de7f5e"/></linearGradient></defs><rect x="2532" y="130" width="63" height="64" fill="url(#cg)" stroke="none" stroke-width="0" rx="0"/><circle cx="2564.4" cy="161.6" r="6.5" fill="#f8f5ef"/><line x1="2564.4" y1="161.6" x2="2553.5" y2="140.8" stroke="#f8f5ef" stroke-width="4.6" stroke-linecap="round"/><line x1="2564.4" y1="161.6" x2="2567.1" y2="141.1" stroke="#f8f5ef" stroke-width="3.6" stroke-linecap="round"/><line x1="2564.4" y1="161.6" x2="2577.5" y2="145.8" stroke="#f8f5ef" stroke-width="4.4" stroke-linecap="round"/><line x1="2564.4" y1="161.6" x2="2584.1" y2="158.6" stroke="#f8f5ef" stroke-width="3.6" stroke-linecap="round"/><line x1="2564.4" y1="161.6" x2="2584.4" y2="166.6" stroke="#f8f5ef" stroke-width="4.4" stroke-linecap="round"/><line x1="2564.4" y1="161.6" x2="2580" y2="177" stroke="#f8f5ef" stroke-width="3.4" stroke-linecap="round"/><line x1="2564.4" y1="161.6" x2="2574.2" y2="179.9" stroke="#f8f5ef" stroke-width="3.6" stroke-linecap="round"/><line x1="2564.4" y1="161.6" x2="2562.1" y2="183.4" stroke="#f8f5ef" stroke-width="3.8" stroke-linecap="round"/><line x1="2564.4" y1="161.6" x2="2551.7" y2="180.4" stroke="#f8f5ef" stroke-width="3.4" stroke-linecap="round"/><line x1="2564.4" y1="161.6" x2="2546.3" y2="173.2" stroke="#f8f5ef" stroke-width="4.2" stroke-linecap="round"/><line x1="2564.4" y1="161.6" x2="2541.1" y2="161.6" stroke="#f8f5ef" stroke-width="3.6" stroke-linecap="round"/><line x1="2564.4" y1="161.6" x2="2545.6" y2="149.5" stroke="#f8f5ef" stroke-width="4.4" stroke-linecap="round"/><rect x="2624" y="134" width="2" height="123" fill="#4d4d4d"/><path d="M2719.8 183.6H2704.5A3.5 3.5 0 0 1 2701 180.1V142.9A3.5 3.5 0 0 1 2704.5 139.4H2726.5L2736.7 149V164.4" fill="none" stroke="#3f86e8" stroke-width="2.6" stroke-linejoin="round"/><path d="M2718.5 154C2716.5 148 2719.5 146.5 2720 150C2720.5 154 2716 160.5 2712 165.5C2709 169 2706.5 169 2707.5 166.5C2709.5 163 2720 161.5 2728 162C2732 162.5 2731.5 165.5 2728.5 164.5C2724.5 163 2720 158 2718.5 154ZM2716.8 158.5L2713.2 164L2725 162.3Z" fill="none" stroke="#3f86e8" stroke-width="1.3"/><path d="M2744.5 179L2748.3 175.2A5.5 5.5 0 0 0 2740.5 167.4L2733 174.9A5.5 5.5 0 0 0 2733.5 182" fill="none" stroke="#3f86e8" stroke-width="2.6" stroke-linecap="round"/><path d="M2728 181L2724.2 184.8A5.5 5.5 0 0 0 2732 192.6L2739.5 185.1A5.5 5.5 0 0 0 2738.5 177.5" fill="none" stroke="#3f86e8" stroke-width="2.6" stroke-linecap="round"/><path d="M386 29.5L398 17.5L410 29.5V43.5A1.5 1.5 0 0 1 408.5 45H405A1.5 1.5 0 0 1 403.5 43.5V36A1.5 1.5 0 0 0 402 34.5H394A1.5 1.5 0 0 0 392.5 36V43.5A1.5 1.5 0 0 1 391 45H387.5A1.5 1.5 0 0 1 386 43.5Z" fill="none" stroke="#f0f0f0" stroke-width="2.3" stroke-linejoin="round"/><path d="M442 19H459.5L465 24.5V42.5A2.5 2.5 0 0 1 462.5 45H441.5A2.5 2.5 0 0 1 439 42.5V22A3 3 0 0 1 442 19Z" fill="none" stroke="#f0f0f0" stroke-width="2.3" stroke-linejoin="round"/><path d="M446 19V26.5H458V19M445.5 45V34.5H459V45" fill="none" stroke="#f0f0f0" stroke-width="2.3"/><path d="M494 17V27.5H505M495 27A12 12 0 0 1 519 27.5C519.5 31 517 34 515 36L499 47" fill="none" stroke="#f0f0f0" stroke-width="2.3" stroke-linecap="round" stroke-linejoin="round"/><path d="M539.0 29.25L544.5 35.75L550.0 29.25" fill="none" stroke="#e6e6e6" stroke-width="2.4" stroke-linecap="round" stroke-linejoin="round"/><path d="M596 22A13.8 13.8 0 1 0 599.5 33" fill="none" stroke="#777" stroke-width="2" stroke-linecap="round"/><path d="M597 17V23H591" fill="none" stroke="#777" stroke-width="2" stroke-linecap="round" stroke-linejoin="round"/><circle cx="629.5" cy="32" r="2.8" fill="#e8e8e8"/><circle cx="640" cy="32" r="2.8" fill="#e8e8e8"/><circle cx="650.5" cy="32" r="2.8" fill="#e8e8e8"/><circle cx="2389" cy="32" r="8" fill="none" stroke="#9c9c9c" stroke-width="2.6"/><line x1="2395" y1="38" x2="2403" y2="46" stroke="#9c9c9c" stroke-width="2.8" stroke-linecap="round"/><path d="M2442 75H2466A3.5 3.5 0 0 1 2469.5 78.5V93A3.5 3.5 0 0 1 2466 96.5H2454L2446 103V96.5H2442A3.5 3.5 0 0 1 2438.5 93V78.5A3.5 3.5 0 0 1 2442 75Z" fill="none" stroke="#f0f0f0" stroke-width="2.2" stroke-linejoin="round"/><circle cx="2649.7" cy="88" r="15" fill="none" stroke="#f2f2f2" stroke-width="2.4"/><circle cx="2649.7" cy="88" r="8.8" fill="#f2f2f2"/><path d="M2805 73.5L2815.5 81L2805 88.5V84.5C2799 84.5 2795 87 2791 93C2792 85 2797 77.5 2805 77.5Z" fill="none" stroke="#fff" stroke-width="2.1" stroke-linejoin="round"/><path d="M2796 75H2788A3.5 3.5 0 0 0 2784.5 78.5V98A3.5 3.5 0 0 0 2788 101.5H2808.5A3.5 3.5 0 0 0 2812 98V93" fill="none" stroke="#fff" stroke-width="2.1"/><path d="M2893.0 84.5L2899.5 91.5L2906.0 84.5" fill="none" stroke="#fff" stroke-width="2.4" stroke-linecap="round" stroke-linejoin="round"/></svg>
<div class="rt" style="left:-42px;top:203px;width:220px;">ペースト</div>
<div class="rt" style="left:166px;top:203px;width:220px;">新しい</div>
<div class="rt" style="left:166px;top:226.5px;width:220px;">スライド</div>
<div class="rt" style="left:301px;top:203px;width:220px;">Copilot を使用し</div>
<div class="rt" style="left:301px;top:226.5px;width:220px;">た新しいスライド</div>
<div class="rt" style="left:1729px;top:203px;width:220px;color:#b4b4b4">SmartArt</div>
<div class="rt" style="left:1729px;top:226.5px;width:220px;color:#b4b4b4">に変換</div>
<div class="rt" style="left:1868px;top:203px;width:220px;">画像</div>
<div class="rt" style="left:2082px;top:203px;width:220px;">描画</div>
<div class="rt" style="left:2208px;top:203px;width:220px;">アド</div>
<div class="rt" style="left:2208px;top:226.5px;width:220px;">イン</div>
<div class="rt" style="left:2329.5px;top:203px;width:220px;">デザイン</div>
<div class="rt" style="left:2329.5px;top:226.5px;width:220px;">の提案</div>
<div class="rt" style="left:2454px;top:203px;width:220px;">Claude</div>
<div class="rt" style="left:2607px;top:203px;width:220px;">PDF を作成し</div>
<div class="rt" style="left:2607px;top:226.5px;width:220px;">てリンクを共有</div>
<div class="a" style="left:621px;top:142px;font-size:26px;line-height:32px;color:#8c8c8c">Meiryo UI</div>
<div class="a" style="left:968px;top:142px;font-size:26px;line-height:32px;color:#8c8c8c">14</div>
<!-- ribbon bottom line -->
  <div class="a" style="left:0;top:264px;width:2933px;height:4px;background:#111"></div>

  <div id="panel"></div>
  <div class="a" style="left:0;top:268px;width:3px;height:1417px;background:#58585c"></div>
  <div class="a" style="left:274px;top:268px;width:8px;height:1417px;background:#222"></div>
  <div class="a" style="left:282px;top:268px;width:2px;height:1417px;background:#0c0c0c"></div>

  <!--THUMBS--><div class="th" style="top:284px"><div class="a sl" style="left:0;top:0"><div class="a" style="left:71px;top:58px;width:1702px;height:8px;background:#1f5a90"></div><div class="a" style="left:0px;top:400px;font-size:72px;line-height:86px;color:#fff;font-weight:bold;white-space:nowrap;width:1844px;text-align:center">トヨタ vs 日産</div><div class="a" style="left:0px;top:525px;font-size:30px;line-height:36px;color:#8aa3c0;font-weight:normal;white-space:nowrap;width:1844px;text-align:center">収益ポジショニング分析 2025</div><div class="a" style="left:0px;top:568px;font-size:30px;line-height:36px;color:#8aa3c0;font-weight:normal;white-space:nowrap;width:1844px;text-align:center">FY2024（2025年3月期）決算データに基づく</div></div></div>
<div class="th" style="top:418px"><div class="a sl" style="left:0;top:0"><div class="a" style="left:71px;top:58px;width:1702px;height:8px;background:#1f5a90"></div><div class="a" style="left:140px;top:118px;font-size:56px;line-height:67px;color:#fff;font-weight:bold;white-space:nowrap;">規模で圧倒するトヨタ、再建を急ぐ日産</div><div class="a" style="left:148px;top:265px;width:1547px;height:106px;background:#2e86c8;"></div><div class="a" style="left:148px;top:300px;font-size:34px;line-height:41px;color:#fff;font-weight:bold;white-space:nowrap;width:510px;text-align:center">指標</div><div class="a" style="left:658px;top:300px;font-size:34px;line-height:41px;color:#fff;font-weight:bold;white-space:nowrap;width:525px;text-align:center">トヨタ</div><div class="a" style="left:1185px;top:300px;font-size:34px;line-height:41px;color:#fff;font-weight:bold;white-space:nowrap;width:510px;text-align:center">日産</div><div class="a" style="left:148px;top:371px;width:1547px;height:106px;background:#0f2545;"></div><div class="a" style="left:175px;top:407px;font-size:32px;line-height:38px;color:#9fb0c6;font-weight:normal;white-space:nowrap;">売上高</div><div class="a" style="left:658px;top:405px;font-size:34px;line-height:41px;color:#fff;font-weight:bold;white-space:nowrap;width:525px;text-align:center">48兆367億円</div><div class="a" style="left:1185px;top:405px;font-size:34px;line-height:41px;color:#fff;font-weight:bold;white-space:nowrap;width:510px;text-align:center">12兆6,332億円</div><div class="a" style="left:148px;top:477px;width:1547px;height:106px;background:#132c52;"></div><div class="a" style="left:175px;top:513px;font-size:32px;line-height:38px;color:#9fb0c6;font-weight:normal;white-space:nowrap;">売上高営業利益率</div><div class="a" style="left:658px;top:511px;font-size:34px;line-height:41px;color:#fff;font-weight:bold;white-space:nowrap;width:525px;text-align:center">+6.5%</div><div class="a" style="left:1185px;top:511px;font-size:34px;line-height:41px;color:#e84c3d;font-weight:bold;white-space:nowrap;width:510px;text-align:center">-0.4%</div><div class="a" style="left:148px;top:583px;width:1547px;height:106px;background:#0f2545;"></div><div class="a" style="left:175px;top:619px;font-size:32px;line-height:38px;color:#9fb0c6;font-weight:normal;white-space:nowrap;">営業利益</div><div class="a" style="left:658px;top:617px;font-size:34px;line-height:41px;color:#fff;font-weight:bold;white-space:nowrap;width:525px;text-align:center">4兆7,955億円</div><div class="a" style="left:1185px;top:617px;font-size:34px;line-height:41px;color:#fff;font-weight:bold;white-space:nowrap;width:510px;text-align:center">698億円</div><div class="a" style="left:148px;top:689px;width:1547px;height:106px;background:#132c52;"></div><div class="a" style="left:175px;top:725px;font-size:32px;line-height:38px;color:#9fb0c6;font-weight:normal;white-space:nowrap;">営業利益率</div><div class="a" style="left:658px;top:723px;font-size:34px;line-height:41px;color:#fff;font-weight:bold;white-space:nowrap;width:525px;text-align:center">10.0%</div><div class="a" style="left:1185px;top:723px;font-size:34px;line-height:41px;color:#fff;font-weight:bold;white-space:nowrap;width:510px;text-align:center">0.6%</div><div class="a" style="left:148px;top:795px;width:1547px;height:106px;background:#0f2545;"></div><div class="a" style="left:175px;top:831px;font-size:32px;line-height:38px;color:#9fb0c6;font-weight:normal;white-space:nowrap;">販売台数</div><div class="a" style="left:658px;top:829px;font-size:34px;line-height:41px;color:#fff;font-weight:bold;white-space:nowrap;width:525px;text-align:center">936万台</div><div class="a" style="left:1185px;top:829px;font-size:34px;line-height:41px;color:#fff;font-weight:bold;white-space:nowrap;width:510px;text-align:center">約334万台</div><div class="a" style="left:148px;top:901px;width:1547px;height:106px;background:#132c52;"></div><div class="a" style="left:175px;top:937px;font-size:32px;line-height:38px;color:#9fb0c6;font-weight:normal;white-space:nowrap;">純利益</div><div class="a" style="left:658px;top:935px;font-size:34px;line-height:41px;color:#fff;font-weight:bold;white-space:nowrap;width:525px;text-align:center">4兆7,650億円</div><div class="a" style="left:1185px;top:935px;font-size:34px;line-height:41px;color:#e84c3d;font-weight:bold;white-space:nowrap;width:510px;text-align:center">-6,708億円</div><div class="a" style="left:655px;top:265px;width:4px;height:700px;background:#0b1b31;"></div><div class="a" style="left:1183px;top:265px;width:4px;height:700px;background:#0b1b31;"></div><div class="a" style="left:100px;top:985px;font-size:28px;line-height:34px;color:#6d86a4;font-weight:normal;white-space:nowrap;">出典: 各社 2025年3月期決算資料</div></div></div>
<div class="th" style="top:552px"><div class="a sl" style="left:0;top:0"><div class="a" style="left:71px;top:58px;width:1702px;height:8px;background:#1f5a90"></div><div class="a" style="left:147px;top:112px;font-size:56px;line-height:67px;color:#fff;font-weight:bold;white-space:nowrap;">トヨタ：減益下でも高水準の収益力を維持</div><div class="a" style="left:64px;top:265px;width:836px;height:74px;background:#2e86c8;"></div><div class="a" style="left:64px;top:284px;font-size:30px;line-height:36px;color:#fff;font-weight:bold;white-space:nowrap;width:418px;text-align:center">指標</div><div class="a" style="left:482px;top:284px;font-size:30px;line-height:36px;color:#fff;font-weight:bold;white-space:nowrap;width:418px;text-align:center">FY2024実績</div><div class="a" style="left:64px;top:339px;width:836px;height:74px;background:#0f2545;"></div><div class="a" style="left:90px;top:361px;font-size:28px;line-height:34px;color:#9fb0c6;font-weight:normal;white-space:nowrap;">売上高</div><div class="a" style="left:482px;top:359px;font-size:30px;line-height:36px;color:#fff;font-weight:bold;white-space:nowrap;width:418px;text-align:center">48兆367億円 (+6.5%)</div><div class="a" style="left:64px;top:413px;width:836px;height:74px;background:#132c52;"></div><div class="a" style="left:90px;top:435px;font-size:28px;line-height:34px;color:#9fb0c6;font-weight:normal;white-space:nowrap;">営業利益</div><div class="a" style="left:482px;top:433px;font-size:30px;line-height:36px;color:#fff;font-weight:bold;white-space:nowrap;width:418px;text-align:center">4兆7,955億円 (-10.4%)</div><div class="a" style="left:64px;top:487px;width:836px;height:74px;background:#0f2545;"></div><div class="a" style="left:90px;top:509px;font-size:28px;line-height:34px;color:#9fb0c6;font-weight:normal;white-space:nowrap;">営業利益率</div><div class="a" style="left:482px;top:507px;font-size:30px;line-height:36px;color:#fff;font-weight:bold;white-space:nowrap;width:418px;text-align:center">10.0%</div><div class="a" style="left:64px;top:561px;width:836px;height:74px;background:#132c52;"></div><div class="a" style="left:90px;top:583px;font-size:28px;line-height:34px;color:#9fb0c6;font-weight:normal;white-space:nowrap;">販売台数</div><div class="a" style="left:482px;top:581px;font-size:30px;line-height:36px;color:#fff;font-weight:bold;white-space:nowrap;width:418px;text-align:center">936万台 (過去最高)</div><div class="a" style="left:64px;top:635px;width:836px;height:74px;background:#0f2545;"></div><div class="a" style="left:90px;top:657px;font-size:28px;line-height:34px;color:#9fb0c6;font-weight:normal;white-space:nowrap;">電動化比率</div><div class="a" style="left:482px;top:655px;font-size:30px;line-height:36px;color:#fff;font-weight:bold;white-space:nowrap;width:418px;text-align:center">46.2% (HEV 40.4%)</div><div class="a" style="left:955px;top:270px;font-size:26px;line-height:31px;color:#2e86c8;font-weight:bold;white-space:nowrap;">強み</div><div class="a" style="left:955px;top:302px;font-size:26px;line-height:31px;color:#dfe6ee;font-weight:normal;white-space:nowrap;">・営業利益率10.0%で業界トップ水準を維持</div><div class="a" style="left:955px;top:332px;font-size:26px;line-height:31px;color:#dfe6ee;font-weight:normal;white-space:nowrap;">・HEV中心の電動化戦略が収益を下支え</div><div class="a" style="left:955px;top:362px;font-size:26px;line-height:31px;color:#dfe6ee;font-weight:normal;white-space:nowrap;">・為替影響を除いても堅調な収益基盤</div><div class="a" style="left:955px;top:395px;width:60px;height:22px;background:#e84c3d;"></div><div class="a" style="left:955px;top:428px;font-size:26px;line-height:31px;color:#dfe6ee;font-weight:normal;white-space:nowrap;">・減益局面でも高水準の利益を確保</div><div class="a" style="left:955px;top:458px;font-size:26px;line-height:31px;color:#dfe6ee;font-weight:normal;white-space:nowrap;">・北米販売が好調、単価上昇が寄与</div><div class="a" style="left:955px;top:488px;font-size:26px;line-height:31px;color:#dfe6ee;font-weight:normal;white-space:nowrap;">・中国市場の競争激化は継続的な課題</div><div class="a" style="left:90px;top:925px;font-size:28px;line-height:34px;color:#6d86a4;font-weight:normal;white-space:nowrap;">出典: トヨタ自動車 2025年3月期決算資料</div></div></div>
<div class="th" style="top:686px"><div class="a sl" style="left:0;top:0"><div class="a" style="left:71px;top:58px;width:1702px;height:8px;background:#1f5a90"></div><div class="a" style="left:147px;top:112px;font-size:56px;line-height:67px;color:#fff;font-weight:bold;white-space:nowrap;">日産：過去最大級の赤字からRe:Nissan始動</div><div class="a" style="left:64px;top:265px;width:836px;height:74px;background:#e84c3d;"></div><div class="a" style="left:64px;top:284px;font-size:30px;line-height:36px;color:#fff;font-weight:bold;white-space:nowrap;width:418px;text-align:center">指標</div><div class="a" style="left:482px;top:284px;font-size:30px;line-height:36px;color:#fff;font-weight:bold;white-space:nowrap;width:418px;text-align:center">FY2024実績</div><div class="a" style="left:64px;top:339px;width:836px;height:74px;background:#0f2545;"></div><div class="a" style="left:90px;top:361px;font-size:28px;line-height:34px;color:#9fb0c6;font-weight:normal;white-space:nowrap;">売上高</div><div class="a" style="left:482px;top:359px;font-size:30px;line-height:36px;color:#fff;font-weight:bold;white-space:nowrap;width:418px;text-align:center">12兆6,332億円 (-0.4%)</div><div class="a" style="left:64px;top:413px;width:836px;height:74px;background:#132c52;"></div><div class="a" style="left:90px;top:435px;font-size:28px;line-height:34px;color:#9fb0c6;font-weight:normal;white-space:nowrap;">営業利益</div><div class="a" style="left:482px;top:433px;font-size:30px;line-height:36px;color:#fff;font-weight:bold;white-space:nowrap;width:418px;text-align:center">698億円 (-87.7%)</div><div class="a" style="left:64px;top:487px;width:836px;height:74px;background:#0f2545;"></div><div class="a" style="left:90px;top:509px;font-size:28px;line-height:34px;color:#9fb0c6;font-weight:normal;white-space:nowrap;">営業利益率</div><div class="a" style="left:482px;top:507px;font-size:30px;line-height:36px;color:#fff;font-weight:bold;white-space:nowrap;width:418px;text-align:center">0.6%</div><div class="a" style="left:64px;top:561px;width:836px;height:74px;background:#132c52;"></div><div class="a" style="left:90px;top:583px;font-size:28px;line-height:34px;color:#9fb0c6;font-weight:normal;white-space:nowrap;">販売台数</div><div class="a" style="left:482px;top:581px;font-size:30px;line-height:36px;color:#fff;font-weight:bold;white-space:nowrap;width:418px;text-align:center">334万台</div><div class="a" style="left:64px;top:635px;width:836px;height:74px;background:#0f2545;"></div><div class="a" style="left:90px;top:657px;font-size:28px;line-height:34px;color:#9fb0c6;font-weight:normal;white-space:nowrap;">純利益</div><div class="a" style="left:482px;top:655px;font-size:30px;line-height:36px;color:#e84c3d;font-weight:bold;white-space:nowrap;width:418px;text-align:center">-6,708億円 (赤字転落)</div><div class="a" style="left:955px;top:270px;font-size:26px;line-height:31px;color:#e84c3d;font-weight:bold;white-space:nowrap;">課題</div><div class="a" style="left:955px;top:302px;font-size:26px;line-height:31px;color:#dfe6ee;font-weight:normal;white-space:nowrap;">・営業利益率10.0%で業界トップ水準を維持</div><div class="a" style="left:955px;top:332px;font-size:26px;line-height:31px;color:#dfe6ee;font-weight:normal;white-space:nowrap;">・HEV中心の電動化戦略が収益を下支え</div><div class="a" style="left:955px;top:362px;font-size:26px;line-height:31px;color:#dfe6ee;font-weight:normal;white-space:nowrap;">・為替影響を除いても堅調な収益基盤</div><div class="a" style="left:955px;top:395px;width:60px;height:22px;background:#1abc9c;"></div><div class="a" style="left:955px;top:428px;font-size:26px;line-height:31px;color:#dfe6ee;font-weight:normal;white-space:nowrap;">・減益局面でも高水準の利益を確保</div><div class="a" style="left:955px;top:458px;font-size:26px;line-height:31px;color:#dfe6ee;font-weight:normal;white-space:nowrap;">・北米販売が好調、単価上昇が寄与</div><div class="a" style="left:955px;top:488px;font-size:26px;line-height:31px;color:#dfe6ee;font-weight:normal;white-space:nowrap;">・中国市場の競争激化は継続的な課題</div><div class="a" style="left:90px;top:925px;font-size:28px;line-height:34px;color:#6d86a4;font-weight:normal;white-space:nowrap;">出典: トヨタ自動車 2025年3月期決算資料</div></div></div>
<div class="a" style="left:56px;top:814px;width:186px;height:110px;border-radius:16px;background:#e8725a"></div><div class="th" style="top:820px"><div class="a sl" style="left:0;top:0">
  <div class="a" style="left:71px;top:57px;width:1702px;height:3px;background:#1f4e79"></div>
  <div class="a" style="left:140px;top:120px;font-size:50px;line-height:60px;color:#fff;white-space:nowrap">収益構造の明暗：営業利益率と電動化戦略の差</div>
<div class="a" style="left:71px;top:270px;width:1705px;height:652px;background:#0b1b31"></div>
<div class="a hc" style="left:72.0px;top:271px;width:424.5px;height:89.7px">評価軸</div>
<div class="a hc" style="left:498.5px;top:271px;width:424.5px;height:89.7px;font-size:29px">XXX</div>
<div class="a hc" style="left:925.0px;top:271px;width:424.0px;height:89.7px;font-size:29px">XXX</div>
<div class="a hc" style="left:1351.0px;top:271px;width:425.0px;height:89.7px">差異</div>
<div class="a tc lb" style="left:72.0px;top:366.0px;width:424.5px;height:92.5px;background:#0f2545">売上規模</div>
<div class="a tc bl" style="left:498.5px;top:366.0px;width:424.5px;height:92.5px;background:#0f2545"><i class="d"></i><i class="d"></i><i class="d"></i><span class="vt">48.0兆円</span></div>
<div class="a tc rd" style="left:925.0px;top:366.0px;width:424.0px;height:92.5px;background:#0f2545"><i class="d"></i><i class="d o"></i><i class="d o"></i><span class="vt">12.6兆円</span></div>
<div class="a tc or" style="left:1351.0px;top:366.0px;width:425.0px;height:92.5px;background:#0f2545">3.8倍</div>
<div class="a tc lb" style="left:72.0px;top:459.5px;width:424.5px;height:91.5px;background:#132a4f">収益力</div>
<div class="a tc bl" style="left:498.5px;top:459.5px;width:424.5px;height:91.5px;background:#132a4f"><i class="d"></i><i class="d"></i><i class="d"></i><span class="vt">利益率10.0%</span></div>
<div class="a tc rd" style="left:925.0px;top:459.5px;width:424.0px;height:91.5px;background:#132a4f"><i class="d"></i><i class="d o"></i><i class="d o"></i><span class="vt">利益率0.6%</span></div>
<div class="a tc or" style="left:1351.0px;top:459.5px;width:425.0px;height:91.5px;background:#132a4f">約17倍</div>
<div class="a tc lb" style="left:72.0px;top:552.0px;width:424.5px;height:91.5px;background:#0f2545">販売台数</div>
<div class="a tc bl" style="left:498.5px;top:552.0px;width:424.5px;height:91.5px;background:#0f2545"><i class="d"></i><i class="d"></i><i class="d"></i><span class="vt">936万台</span></div>
<div class="a tc rd" style="left:925.0px;top:552.0px;width:424.0px;height:91.5px;background:#0f2545"><i class="d"></i><i class="d"></i><i class="d o"></i><span class="vt">340万台</span></div>
<div class="a tc or" style="left:1351.0px;top:552.0px;width:425.0px;height:91.5px;background:#0f2545">2.8倍</div>
<div class="a tc lb" style="left:72.0px;top:644.5px;width:424.5px;height:91.5px;background:#132a4f">電動化</div>
<div class="a tc bl" style="left:498.5px;top:644.5px;width:424.5px;height:91.5px;background:#132a4f"><i class="d"></i><i class="d"></i><i class="d o"></i><span class="vt">HEV中心46.2%</span></div>
<div class="a tc rd" style="left:925.0px;top:644.5px;width:424.0px;height:91.5px;background:#132a4f"><i class="d"></i><i class="d"></i><i class="d o"></i><span class="vt">e-POWER/BEV</span></div>
<div class="a tc or" style="left:1351.0px;top:644.5px;width:425.0px;height:91.5px;background:#132a4f">同水準</div>
<div class="a tc lb" style="left:72.0px;top:737.0px;width:424.5px;height:91.5px;background:#0f2545">財務健全性</div>
<div class="a tc bl" style="left:498.5px;top:737.0px;width:424.5px;height:91.5px;background:#0f2545"><i class="d"></i><i class="d"></i><i class="d"></i><span class="vt">強固</span></div>
<div class="a tc rd" style="left:925.0px;top:737.0px;width:424.0px;height:91.5px;background:#0f2545"><i class="d"></i><i class="d o"></i><i class="d o"></i><span class="vt">赤字転落</span></div>
<div class="a tc or" style="left:1351.0px;top:737.0px;width:425.0px;height:91.5px;background:#0f2545">大差</div>
<div class="a tc lb" style="left:72.0px;top:829.5px;width:424.5px;height:91.5px;background:#132a4f">成長見通し</div>
<div class="a tc bl" style="left:498.5px;top:829.5px;width:424.5px;height:91.5px;background:#132a4f"><i class="d"></i><i class="d"></i><i class="d o"></i><span class="vt">減益だが堅調</span></div>
<div class="a tc rd" style="left:925.0px;top:829.5px;width:424.0px;height:91.5px;background:#132a4f"><i class="d"></i><i class="d o"></i><i class="d o"></i><span class="vt">再建中</span></div>
<div class="a tc or" style="left:1351.0px;top:829.5px;width:425.0px;height:91.5px;background:#132a4f">回復途上</div>
  <div class="a ft" style="left:84.6px;word-spacing:5px">出典: 各社 2025年3月期決算資料より作成</div><div class="a ft" style="left:593px">｜</div><div class="a ft" style="left:630px"><i class="d"></i><i class="d"></i><i class="d"></i>=優勢</div><div class="a ft" style="left:795px"><i class="d"></i><i class="d"></i><i class="d o"></i>=標準</div><div class="a ft" style="left:959px"><i class="d"></i><i class="d o"></i><i class="d o"></i>=劣勢</div>
  
  <div class="a" style="left:0;top:0;width:1844px;height:1040px;"></div></div></div>
<div class="th" style="top:954px"><div class="a sl" style="left:0;top:0"><div class="a" style="left:71px;top:58px;width:1702px;height:8px;background:#1f5a90"></div><div class="a" style="left:147px;top:112px;font-size:56px;line-height:67px;color:#fff;font-weight:bold;white-space:nowrap;">両社を分ける構造的な競争力の差</div><div class="a" style="left:76px;top:264px;width:822px;height:338px;background:transparent;border:10px solid #2e86c8;border-radius:45px"></div><div class="a" style="left:954px;top:264px;width:835px;height:338px;background:transparent;border:10px solid #e84c3d;border-radius:45px"></div><div class="a" style="left:76px;top:635px;width:1713px;height:274px;background:transparent;border:10px solid #1abc9c;border-radius:45px"></div><div class="a" style="left:120px;top:290px;font-size:26px;line-height:31px;color:#2e86c8;font-weight:bold;white-space:nowrap;">トヨタの構造的強み</div><div class="a" style="left:120px;top:322px;font-size:24px;line-height:29px;color:#dfe6ee;font-weight:normal;white-space:nowrap;">・全方位電動化戦略（HEV/PHEV/BEV/FCEV）</div><div class="a" style="left:120px;top:352px;font-size:24px;line-height:29px;color:#dfe6ee;font-weight:normal;white-space:nowrap;">・強固な財務基盤と高い営業利益率</div><div class="a" style="left:120px;top:382px;font-size:24px;line-height:29px;color:#dfe6ee;font-weight:normal;white-space:nowrap;">・グローバルな生産・販売ネットワーク</div><div class="a" style="left:120px;top:412px;font-size:24px;line-height:29px;color:#dfe6ee;font-weight:normal;white-space:nowrap;">・ハイブリッド技術の圧倒的優位</div><div class="a" style="left:1000px;top:290px;font-size:26px;line-height:31px;color:#e84c3d;font-weight:bold;white-space:nowrap;">日産の構造的課題</div><div class="a" style="left:1000px;top:322px;font-size:24px;line-height:29px;color:#dfe6ee;font-weight:normal;white-space:nowrap;">・収益性の大幅な低下</div><div class="a" style="left:1000px;top:352px;font-size:24px;line-height:29px;color:#dfe6ee;font-weight:normal;white-space:nowrap;">・北米・中国での販売不振</div><div class="a" style="left:1000px;top:382px;font-size:24px;line-height:29px;color:#dfe6ee;font-weight:normal;white-space:nowrap;">・Re:Nissanによる再建途上</div><div class="a" style="left:1000px;top:412px;font-size:24px;line-height:29px;color:#dfe6ee;font-weight:normal;white-space:nowrap;">・電動化投資の遅れ</div><div class="a" style="left:120px;top:660px;font-size:26px;line-height:31px;color:#1abc9c;font-weight:bold;white-space:nowrap;">今後の注目ポイント</div><div class="a" style="left:120px;top:692px;font-size:24px;line-height:29px;color:#dfe6ee;font-weight:normal;white-space:nowrap;">1. トヨタ：関税影響下での利益率維持と次世代BEVの投入時期</div><div class="a" style="left:120px;top:722px;font-size:24px;line-height:29px;color:#dfe6ee;font-weight:normal;white-space:nowrap;">2. 日産：Re:Nissan計画の進捗、2026年度の黒字化達成</div><div class="a" style="left:120px;top:752px;font-size:24px;line-height:29px;color:#dfe6ee;font-weight:normal;white-space:nowrap;">3. 両社の協業：ホンダとの統合破談後の提携戦略</div></div></div>
<div class="num" style="top:286px">1</div><div class="num" style="top:420px">2</div><div class="num" style="top:554px">3</div><div class="num" style="top:688px">4</div><div class="num" style="top:822px">5</div><div class="num" style="top:956px">6</div><!--/THUMBS-->
<div id="main"></div>
  <div class="a" style="left:284px;top:1610.5px;width:1954px;height:3px;background:#000"></div>
  <div class="a" style="left:284px;top:1614px;width:1954px;height:71px;background:#282828"></div>
  <div class="a" style="left:298px;top:1628px;font-size:22px;color:#f0f0f0;line-height:32px;letter-spacing:-1px">ノートを入力</div>
  <div class="a" style="left:2238px;top:268px;width:2px;height:1417px;background:#0c0c0c"></div>

  <svg class="a" style="left:0;top:0" width="420" height="420" viewBox="0 0 420 420">
<rect x="341" y="341" width="62" height="62" rx="15" fill="#2a2a2a" stroke="#6e6e6e" stroke-width="2"/>
<path d="M372.9 356.5Q375.04999999999995 362.95000000000005 381.5 365.1Q375.04999999999995 367.25 372.9 373.70000000000005Q370.75 367.25 364.29999999999995 365.1Q370.75 362.95000000000005 372.9 356.5Z" fill="#fff"/><path d="M381.4 370.0Q382.825 374.275 387.09999999999997 375.7Q382.825 377.125 381.4 381.4Q379.97499999999997 377.125 375.7 375.7Q379.97499999999997 374.275 381.4 370.0Z" fill="#fff"/>
<g stroke="#fff" stroke-width="3" stroke-linecap="round"><path d="M358.4 378.3L365.1 371.3M364.4 380.1L369 375.4M358.4 385.7L361.8 382.4M366.2 386.5L371.8 381.1"/></g>
</svg>
<div id="slide">
  <div class="a" style="left:71px;top:57px;width:1702px;height:3px;background:#1f4e79"></div>
  <div class="a" style="left:140px;top:120px;font-size:50px;line-height:60px;color:#fff;white-space:nowrap">収益構造の明暗：営業利益率と電動化戦略の差</div>
<div class="a" style="left:71px;top:270px;width:1705px;height:652px;background:#0b1b31"></div>
<div class="a hc" style="left:72.0px;top:271px;width:424.5px;height:89.7px">評価軸</div>
<div class="a hc" style="left:498.5px;top:271px;width:424.5px;height:89.7px;font-size:29px">XXX</div>
<div class="a hc" style="left:925.0px;top:271px;width:424.0px;height:89.7px;font-size:29px">XXX</div>
<div class="a hc" style="left:1351.0px;top:271px;width:425.0px;height:89.7px">差異</div>
<div class="a tc lb" style="left:72.0px;top:366.0px;width:424.5px;height:92.5px;background:#0f2545">売上規模</div>
<div class="a tc bl" style="left:498.5px;top:366.0px;width:424.5px;height:92.5px;background:#0f2545"><i class="d"></i><i class="d"></i><i class="d"></i><span class="vt">48.0兆円</span></div>
<div class="a tc rd" style="left:925.0px;top:366.0px;width:424.0px;height:92.5px;background:#0f2545"><i class="d"></i><i class="d o"></i><i class="d o"></i><span class="vt">12.6兆円</span></div>
<div class="a tc or" style="left:1351.0px;top:366.0px;width:425.0px;height:92.5px;background:#0f2545">3.8倍</div>
<div class="a tc lb" style="left:72.0px;top:459.5px;width:424.5px;height:91.5px;background:#132a4f">収益力</div>
<div class="a tc bl" style="left:498.5px;top:459.5px;width:424.5px;height:91.5px;background:#132a4f"><i class="d"></i><i class="d"></i><i class="d"></i><span class="vt">利益率10.0%</span></div>
<div class="a tc rd" style="left:925.0px;top:459.5px;width:424.0px;height:91.5px;background:#132a4f"><i class="d"></i><i class="d o"></i><i class="d o"></i><span class="vt">利益率0.6%</span></div>
<div class="a tc or" style="left:1351.0px;top:459.5px;width:425.0px;height:91.5px;background:#132a4f">約17倍</div>
<div class="a tc lb" style="left:72.0px;top:552.0px;width:424.5px;height:91.5px;background:#0f2545">販売台数</div>
<div class="a tc bl" style="left:498.5px;top:552.0px;width:424.5px;height:91.5px;background:#0f2545"><i class="d"></i><i class="d"></i><i class="d"></i><span class="vt">936万台</span></div>
<div class="a tc rd" style="left:925.0px;top:552.0px;width:424.0px;height:91.5px;background:#0f2545"><i class="d"></i><i class="d"></i><i class="d o"></i><span class="vt">340万台</span></div>
<div class="a tc or" style="left:1351.0px;top:552.0px;width:425.0px;height:91.5px;background:#0f2545">2.8倍</div>
<div class="a tc lb" style="left:72.0px;top:644.5px;width:424.5px;height:91.5px;background:#132a4f">電動化</div>
<div class="a tc bl" style="left:498.5px;top:644.5px;width:424.5px;height:91.5px;background:#132a4f"><i class="d"></i><i class="d"></i><i class="d o"></i><span class="vt">HEV中心46.2%</span></div>
<div class="a tc rd" style="left:925.0px;top:644.5px;width:424.0px;height:91.5px;background:#132a4f"><i class="d"></i><i class="d"></i><i class="d o"></i><span class="vt">e-POWER/BEV</span></div>
<div class="a tc or" style="left:1351.0px;top:644.5px;width:425.0px;height:91.5px;background:#132a4f">同水準</div>
<div class="a tc lb" style="left:72.0px;top:737.0px;width:424.5px;height:91.5px;background:#0f2545">財務健全性</div>
<div class="a tc bl" style="left:498.5px;top:737.0px;width:424.5px;height:91.5px;background:#0f2545"><i class="d"></i><i class="d"></i><i class="d"></i><span class="vt">強固</span></div>
<div class="a tc rd" style="left:925.0px;top:737.0px;width:424.0px;height:91.5px;background:#0f2545"><i class="d"></i><i class="d o"></i><i class="d o"></i><span class="vt">赤字転落</span></div>
<div class="a tc or" style="left:1351.0px;top:737.0px;width:425.0px;height:91.5px;background:#0f2545">大差</div>
<div class="a tc lb" style="left:72.0px;top:829.5px;width:424.5px;height:91.5px;background:#132a4f">成長見通し</div>
<div class="a tc bl" style="left:498.5px;top:829.5px;width:424.5px;height:91.5px;background:#132a4f"><i class="d"></i><i class="d"></i><i class="d o"></i><span class="vt">減益だが堅調</span></div>
<div class="a tc rd" style="left:925.0px;top:829.5px;width:424.0px;height:91.5px;background:#132a4f"><i class="d"></i><i class="d o"></i><i class="d o"></i><span class="vt">再建中</span></div>
<div class="a tc or" style="left:1351.0px;top:829.5px;width:425.0px;height:91.5px;background:#132a4f">回復途上</div>
  <div class="a ft" style="left:84.6px;word-spacing:5px">出典: 各社 2025年3月期決算資料より作成</div><div class="a ft" style="left:593px">｜</div><div class="a ft" style="left:630px"><i class="d"></i><i class="d"></i><i class="d"></i>=優勢</div><div class="a ft" style="left:795px"><i class="d"></i><i class="d"></i><i class="d o"></i>=標準</div><div class="a ft" style="left:959px"><i class="d"></i><i class="d o"></i><i class="d o"></i>=劣勢</div>
  <div class="a" style="left:0;top:1014px;width:1844px;height:23px;background:linear-gradient(90deg,#2f86c8 0%,#22aab6 30%,#1abc9c 50%,#22aab6 70%,#2f86c8 100%)"></div>
  <div class="a" style="left:0;top:0;width:1844px;height:1040px;box-shadow:inset 1.5px 1.5px 0 0 #e8e8e8,inset -2.5px -3px 0 0 #e0e0e0"></div>
</div>

  <div id="cp"></div>
  <div class="a" style="left:2272px;top:276px;font-size:30px;font-weight:bold;color:#e6e6e6;line-height:36px">Claude</div>
  <div id="card"></div>
<div class="a" style="left:2298.5px;top:378.5px;width:83px;height:47px;border:1.5px solid #dedcd5;border-radius:11px;background:#faf9f5"></div>
<div class="a" style="left:2316px;top:387px;font-size:24px;line-height:30px;color:#3b3a36">Beta</div>
<svg class="a" style="left:2778px;top:387px" width="32" height="32" viewBox="0 0 32 32" fill="none" stroke="#3a3a36" stroke-width="2.2"><path d="M16 4a12 12 0 1 1-6.5 22.1L4.5 28l1.6-5.2A12 12 0 0 1 16 4z"/><path d="M16 10v12M10 16h12"/></svg>
<div class="a" style="left:2855px;top:389px;width:6px;height:6px;border-radius:50%;background:#3a3a36"></div><div class="a" style="left:2855px;top:399px;width:6px;height:6px;border-radius:50%;background:#3a3a36"></div><div class="a" style="left:2855px;top:409px;width:6px;height:6px;border-radius:50%;background:#3a3a36"></div>
<div class="a ct" style="left:2299px;top:440.6px;color:#b3b1ab">字化けやフォント関連の問題は報告されてい</div>
<div class="a ct" style="left:2299px;top:482.9px;">ません。残りの指摘はすべて既存のレイアウ</div>
<div class="a ct" style="left:2299px;top:525.4px;">ト・コントラストに関するもので、フォント</div>
<div class="a ct" style="left:2299px;top:566.9px;">変更とは無関係です。</div>
<div class="a" style="left:2299px;top:643px;font-size:24px;line-height:30px;color:#6e6d68">Used a tool</div>
<svg class="a" style="left:2436px;top:648px" width="14" height="20" viewBox="0 0 14 20" fill="none" stroke="#6e6d68" stroke-width="2.2"><path d="M3 3l7 7-7 7"/></svg>
<div class="a ct" style="left:2299px;top:697.0px;">全<span class="serif">6</span>スライドのフォントを<b>メイリオ<span class="serif">UI</span></b>に統一し</div>
<div class="a ct" style="left:2299px;top:738.0px;">ました <span class="chk">✓</span></div>
<div class="a ct" style="left:2299px;top:805.0px;">変更内容：</div>
<div class="a" style="left:2306px;top:886.7px;width:10px;height:10px;border-radius:50%;background:#1f1f1f"></div>
<div class="a" style="left:2306px;top:979px;width:10px;height:10px;border-radius:50%;background:#1f1f1f"></div>
<div class="a" style="left:2306px;top:1071.5px;width:10px;height:10px;border-radius:50%;background:#1f1f1f"></div>
<div class="a ct" style="left:2339px;top:870.7px;"><b>テーマフォント</b>（見出し・本文）<svg class="arw" width="24" height="20" viewBox="0 0 24 20"><path d="M2 10H21M14 3L21 10L14 17" fill="none" stroke="#1f1f1f" stroke-width="2.2" stroke-linejoin="round"/></svg><span class="serif">Meiryo</span></div>
<div class="a ct" style="left:2339px;top:913.0px;"><span class="serif">UI</span></div>
<div class="a ct" style="left:2339px;top:963.0px;"><b>各スライドのテキスト</b> （<span class="serif">Montserrat /</span></div>
<div class="a ct" style="left:2339px;top:1005.0px;"><span class="serif">Source Sans Pro</span>）<svg class="arw" width="24" height="20" viewBox="0 0 24 20"><path d="M2 10H21M14 3L21 10L14 17" fill="none" stroke="#1f1f1f" stroke-width="2.2" stroke-linejoin="round"/></svg><span class="serif">Meiryo UI </span>に置換</div>
<div class="a ct" style="left:2339px;top:1055.5px;"><b>テーブル内セル</b> のフォント <svg class="arw" width="24" height="20" viewBox="0 0 24 20"><path d="M2 10H21M14 3L21 10L14 17" fill="none" stroke="#1f1f1f" stroke-width="2.2" stroke-linejoin="round"/></svg><span class="serif">Meiryo UI </span>に</div>
<div class="a ct" style="left:2339px;top:1096.6px;">更新</div>
<div class="a ct" style="left:2299px;top:1162.0px;">日本語表示に最適化されたフォントで、スラ</div>
<div class="a ct" style="left:2299px;top:1204.0px;">イド全体の統一感が向上しました。他に調整</div>
<div class="a ct" style="left:2299px;top:1246.0px;">があればお知らせください！</div>
<svg class="a" style="left:2309px;top:1314px" width="26" height="32" viewBox="0 0 26 32" fill="none" stroke="#8a8984" stroke-width="2"><rect x="3" y="5" width="20" height="25" rx="3"/><rect x="8" y="2" width="10" height="6" rx="2"/><path d="M7 15c2-2 4 2 6 0s4 2 6 0M7 20c2-2 4 2 6 0s4 2 6 0M7 25c2-2 4 2 6 0s4 2 6 0" stroke-width="1.4"/></svg>
<svg class="a" style="left:2359px;top:1315px" width="30" height="30" viewBox="0 0 30 30" fill="none" stroke="#8a8984" stroke-width="2" stroke-linejoin="round"><path d="M4 13h5v14H4zM9 14l6-10c2 0 3 1.5 3 3.5L17 12h7c1.5 0 2.5 1.5 2.2 3l-2 9c-.3 1.5-1.5 3-3 3H9"/></svg>
<svg class="a" style="left:2411px;top:1318px" width="30" height="30" viewBox="0 0 30 30" fill="none" stroke="#8a8984" stroke-width="2" stroke-linejoin="round"><path d="M4 3h5v14H4zM9 16l6 10c2 0 3-1.5 3-3.5L17 18h7c1.5 0 2.5-1.5 2.2-3l-2-9c-.3-1.5-1.5-3-3-3H9"/></svg>
<div class="a" style="left:2282px;top:1393px;width:616px;height:101px;background:#f2f0e9;border:1.5px solid #dcdad2;border-radius:34px 34px 0 0"></div>
<div class="a" style="left:2315px;top:1418px;font-size:24px;line-height:32px;color:#3b3a36">Slide 5 selected</div>
<svg class="a" style="left:2835px;top:1424px" width="22" height="22" viewBox="0 0 22 22" stroke="#3b3a36" stroke-width="2.2"><path d="M3 3l16 16M19 3L3 19"/></svg>
<div class="a" style="left:2283px;top:1471px;width:614px;height:182px;background:#fff;border:1.5px solid #dcdad2;border-radius:38px"></div>
<div class="a" style="left:2316px;top:1503px;font-size:29.5px;line-height:38px;color:#7b7a75">Reply</div>
<svg class="a" style="left:2321px;top:1585px" width="30" height="30" viewBox="0 0 30 30" stroke="#2b2b28" stroke-width="2.4"><path d="M15 3v24M3 15h24"/></svg>
<svg class="a" style="left:2390px;top:1587px" width="30" height="26" viewBox="0 0 30 26" fill="none" stroke="#3b3a36" stroke-width="2" stroke-linejoin="round"><path d="M2 3v20l13-10zM15 3v20l13-10z"/></svg>
<div class="a" style="left:2643px;top:1582px;font-size:24px;line-height:34px;color:#1f1f1d">Opus 4.6</div>
<svg class="a" style="left:2750px;top:1592px" width="20" height="14" viewBox="0 0 20 14" fill="none" stroke="#555" stroke-width="2"><path d="M2 3l8 8 8-8"/></svg>
<div class="a" style="left:2812px;top:1568px;width:64px;height:64px;border-radius:13px;background:#e6b3a3"></div>
<svg class="a" style="left:2828px;top:1582px" width="32" height="36" viewBox="0 0 32 36" fill="none" stroke="#fff" stroke-width="3" stroke-linecap="round"><path d="M16 33V5M5 16L16 5l11 11"/></svg>
<div class="a" style="left:2880px;top:279px;width:28px;height:28px;border-radius:50%;background:#9a9a9a"></div>
<svg class="a" style="left:2884px;top:283px" width="20" height="20" viewBox="0 0 20 20" stroke="#222" stroke-width="2.6"><path d="M4 4l12 12M16 4L4 16"/></svg>

</div></div>
</body></html>
